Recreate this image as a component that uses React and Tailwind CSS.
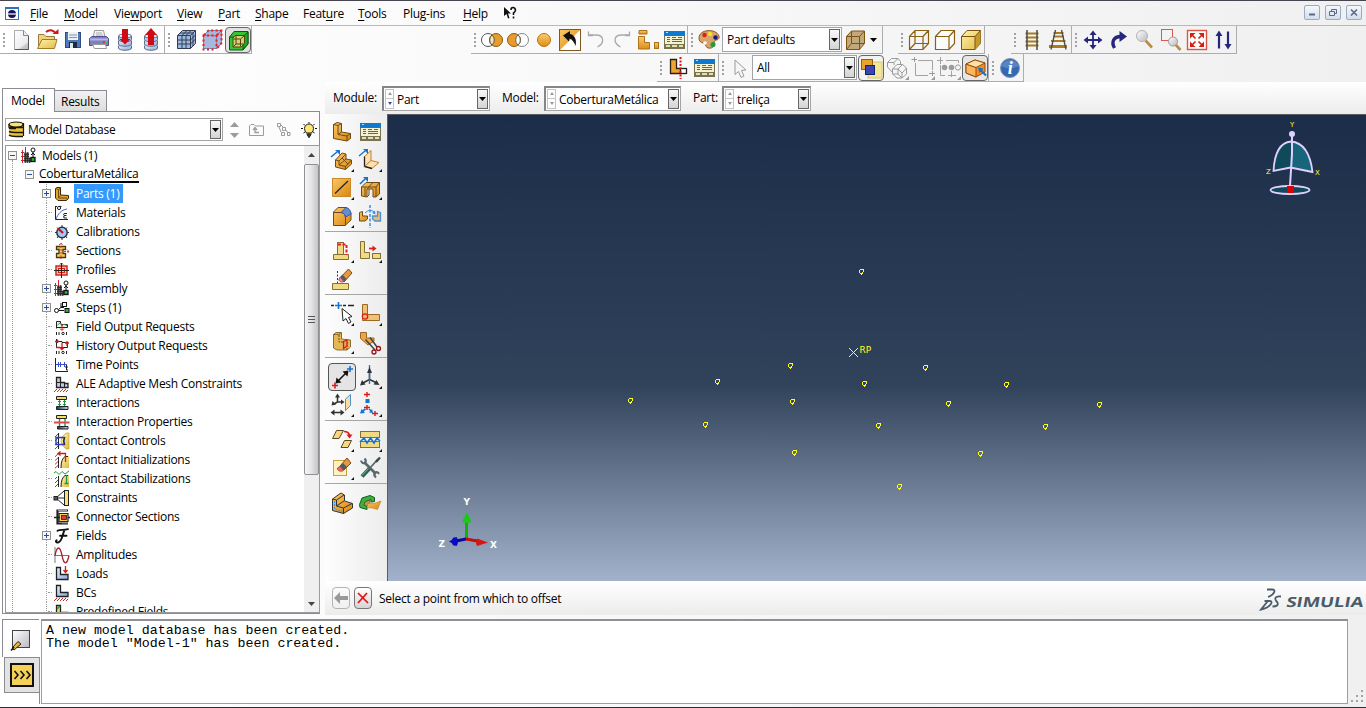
import React from "react";

const Svg = ({ s = 26, children }) => (
  <svg width={s} height={s} viewBox={`0 0 ${s} ${s}`} fill="none" className="block shrink-0">
    {children}
  </svg>
);

const Defs = () => (
  <svg width="0" height="0" className="absolute">
    <defs>
      <linearGradient id="or" x1="0" y1="0" x2="1" y2="1">
        <stop offset="0" stopColor="#fbc766" />
        <stop offset="1" stopColor="#d9860f" />
      </linearGradient>
      <linearGradient id="orv" x1="0" y1="0" x2="0" y2="1">
        <stop offset="0" stopColor="#fbcb70" />
        <stop offset="1" stopColor="#dd8d17" />
      </linearGradient>
      <linearGradient id="ye" x1="0" y1="0" x2="1" y2="1">
        <stop offset="0" stopColor="#fff3a8" />
        <stop offset="1" stopColor="#e0ba4a" />
      </linearGradient>
      <linearGradient id="bl" x1="0" y1="0" x2="1" y2="1">
        <stop offset="0" stopColor="#e6effb" />
        <stop offset="1" stopColor="#8ba6d8" />
      </linearGradient>
      <linearGradient id="gr" x1="0" y1="0" x2="1" y2="1">
        <stop offset="0" stopColor="#ffffff" />
        <stop offset="1" stopColor="#b9b9c0" />
      </linearGradient>
      <linearGradient id="dk" x1="0" y1="0" x2="1" y2="0">
        <stop offset="0" stopColor="#1c2f66" />
        <stop offset="1" stopColor="#c8d4ee" />
      </linearGradient>
    </defs>
  </svg>
);

const Grip = ({ c = "w-2" }) => (
  <div className={`${c} flex shrink-0 flex-col items-center justify-center gap-0.5`}>
    {[0, 1, 2, 3].map((i) => (
      <div key={i} className="h-0.5 w-0.5 bg-[#a2a2a6]" />
    ))}
  </div>
);

const Arrow = ({ up, c = "#000" }) => (
  <svg width="7" height="4" viewBox="0 0 7 4" className="block">
    <path d={up ? "M0 4L3.5 0L7 4Z" : "M0 0H7L3.5 4Z"} fill={c} />
  </svg>
);

/* ---------- file toolbar ---------- */
const Table = ({ x, y }) => (
  <g transform={`translate(${x} ${y})`} shapeRendering="crispEdges">
    <rect x="0" y="1" width="21" height="17" fill="#77744f" />
    <rect x="0" y="0" width="21" height="5" fill="#0f79cf" />
    <rect x="2" y="1" width="2" height="1" fill="#bfe0fa" />
    <rect x="1" y="5" width="19" height="8" fill="#f5f2d2" />
    <path d="M3 6.500H6M8 6.500H12M14 6.500H18M3 8.500H6M8 8.500H18M3 10.500H6M8 10.500H18" stroke="#5d6470" />
    <path d="M2 15H6M8 15H13M15 15H19" stroke="#e3dfb0" strokeWidth="2" />
  </g>
);

const icNew = (
  <Svg>
    <path d="M6.500 3.500H15.500L20.500 8.500V22.500H6.500Z" fill="url(#gr)" stroke="#88888f" />
    <path d="M6.500 3.500H15.500V8.500H20.500V15L10 22.500H6.500Z" fill="#fff" opacity=".6" />
    <path d="M20.500 9V22.500H7" stroke="#55555c" />
    <path d="M15.500 3.500V8.500H20.500" stroke="#88888f" fill="#eee" />
  </Svg>
);
const icOpen = (
  <Svg>
    <path d="M4.500 21V7.500H10L12 9.500H20.500V13" fill="#f3d27c" stroke="#9a7b3e" />
    <path d="M3.500 21.500L8 12.500H23L20.500 21.500Z" fill="url(#ye)" stroke="#a17c28" />
    <path d="M12 5C15 2.500 19 2.500 21.500 6" stroke="#d01818" strokeWidth="2" />
    <path d="M18.500 7H24.500V2Z" fill="#d01818" />
  </Svg>
);
const icSave = (
  <Svg>
    <rect x="5.500" y="5.500" width="15" height="15" fill="#4d79b8" stroke="#2f4d80" />
    <rect x="8" y="5" width="10" height="8" fill="#eef1f4" />
    <path d="M9 8H17M9 10.500H17" stroke="#8a93a0" />
    <rect x="9" y="15" width="8" height="6" fill="#1e2a40" />
    <rect x="10" y="16" width="3" height="5" fill="#dfe6f0" />
  </Svg>
);
const icPrint = (
  <Svg>
    <path d="M8.500 3.500H17.500L19.500 12H7Z" fill="#f4f4f4" stroke="#9a9a9a" />
    <path d="M10 6H16M10 8H17" stroke="#aaa" />
    <path d="M3.500 11.500L6 9.500H20.500L22.500 11.500V18.500H3.500Z" fill="#7c7fc0" stroke="#50528e" />
    <path d="M4 12.500H22" stroke="#b5b7e2" strokeWidth="2" />
    <rect x="17" y="14" width="2" height="2" fill="#d33" />
    <rect x="19" y="14" width="2" height="2" fill="#3c6" />
    <path d="M6.500 17.500H19.500L20.500 21.500H8.500Z" fill="#fff" stroke="#999" />
  </Svg>
);
const Disks = () => (
  <g stroke="#5e6c88">
    <path d="M6.500 18.500V21C6.500 24 19.500 24 19.500 21V18.500" fill="url(#bl)" />
    <path d="M6.500 13.500V17C6.500 20 19.500 20 19.500 17V13.500" fill="url(#bl)" />
    <path d="M6.500 9V12.500C6.500 15.500 19.500 15.500 19.500 12.500V9" fill="#b5c6e8" />
    <ellipse cx="13" cy="9" rx="6.500" ry="2" fill="#e8eefa" />
  </g>
);
const icDbDown = (
  <Svg>
    <Disks />
    <path d="M10 2H16V12H18.500L13 17.500L7.500 12H10Z" fill="#cf0a12" />
  </Svg>
);
const icDbUp = (
  <Svg>
    <Disks />
    <path d="M10 18H16V8H19L13 1L7 8H10Z" fill="#cf0a12" />
  </Svg>
);
const cubeF = "M4.500 8.500L9.500 3.500H22.500V16.500L17.500 21.500H4.500Z";
const icMesh = (
  <Svg>
    <path d={cubeF} fill="#9db8e0" stroke="#333c52" />
    <path d="M4.500 8.500H17.500V21.500M17.500 8.500L22.500 3.500M9 8.500V21.500M13 8.500V21.500M4.500 13H17.500L22.500 8M4.500 17H17.500L22.500 12M9 8.500L14 3.500M13 8.500L18 3.500M7 6H20V19" stroke="#333c52" />
  </Svg>
);
const icSeed = (
  <Svg>
    <path d={cubeF} fill="#a5b8de" />
    <path d="M4.500 8.500L9.500 3.500H22.500V16.500L17.500 21.500H4.500ZM4.500 8.500H17.500V21.500M17.500 8.500L22.500 3.500" stroke="#7787b5" />
    <path d="M3.500 8.500H17.500V22M4.500 8V22.500H17M5 8L9.500 3.500H22.500V16L18 21.500M18 8L22 4" stroke="#ee1c24" strokeWidth="2" strokeDasharray="2 2.500" />
  </Svg>
);
const icGreen = (
  <Svg>
    <path d="M4.500 10L9 4.500H23V17L18 23H4.500Z" fill="#36c436" stroke="#145214" />
    <path d="M18 9.500L23 5V17L18 22.500Z" fill="#1fa62a" stroke="#145214" />
    <path d="M4.500 10H18" stroke="#145214" />
    <path d="M10 8.500H19.500V16.500L16 20H8V11Z" fill="#d9cf74" stroke="#4c4610" />
    <path d="M8.500 12H15.500V19.500M15.500 12L19 9M11 9V17H19M11 17L8 20" stroke="#4c4610" />
  </Svg>
);

/* ---------- right toolbar, first row ---------- */
const icCircA = (
  <Svg>
    <circle cx="9" cy="13" r="6.500" fill="#fff" stroke="#555" />
    <circle cx="17" cy="13" r="6.500" fill="#e99c2c" stroke="#8a5a14" />
    <path d="M13 8A6.500 6.500 0 0 1 13 18A6.500 6.500 0 0 1 13 8Z" fill="#ffe3a8" stroke="#555" />
  </Svg>
);
const icCircB = (
  <Svg>
    <circle cx="17" cy="13" r="6.500" fill="#fff" stroke="#888" />
    <circle cx="9" cy="13" r="6.500" fill="#e99c2c" stroke="#8a5a14" />
    <path d="M13 8A6.500 6.500 0 0 1 13 18A6.500 6.500 0 0 1 13 8Z" fill="#fff" stroke="#666" />
  </Svg>
);
const icCircC = (
  <Svg>
    <circle cx="13" cy="13" r="6.500" fill="url(#orv)" stroke="#b9720f" />
  </Svg>
);
const icReplace = (
  <Svg>
    <rect x="2.500" y="2.500" width="21" height="21" fill="#fff" stroke="#7c5a20" />
    <path d="M3 3H23L3 23Z" fill="url(#or)" />
    <path d="M6 8.500L13 4V7C18 8 20 13 18.500 19C17 15 15.500 12.500 12.500 11.500L12 14.500Z" fill="#111" />
  </Svg>
);
const icUndo = (
  <Svg>
    <path d="M6 8H13C21 8 22 16 14.500 20" stroke="#a9a9ad" strokeWidth="1.300" />
    <path d="M5.500 4.500V8.500H10" stroke="#a9a9ad" strokeWidth="1.300" />
  </Svg>
);
const icRedo = (
  <Svg>
    <path d="M20 8H13C4 8 4 16 11.500 20" stroke="#a9a9ad" strokeWidth="1.300" />
    <path d="M20.500 4.500V8.500H16" stroke="#a9a9ad" strokeWidth="1.300" />
  </Svg>
);
const icParts = (
  <Svg>
    <path d="M4 3.500H12V7H4Z" fill="url(#orv)" stroke="#ad7116" />
    <path d="M3.500 9.500H9.500V15.500H14.500V22H3.500Z" fill="url(#orv)" stroke="#ad7116" />
    <rect x="19.500" y="15.500" width="4" height="6" fill="url(#orv)" stroke="#ad7116" />
  </Svg>
);
const icTable = (
  <Svg>
    <Table x={3} y={4} />
  </Svg>
);
const icPalette = (
  <Svg>
    <path d="M3 11C3 2 20 1 23 9C24 14 19 12 18 15C20 18 17 22 12 21C9 20 10 16 7 16C4 15 3 14 3 11Z" fill="#d8a469" stroke="#8b5a2b" />
    <circle cx="8.500" cy="8" r="2.200" fill="#d8201c" />
    <circle cx="14" cy="7" r="2.200" fill="#f2e11f" />
    <circle cx="19.500" cy="10.500" r="2.200" fill="#18187e" />
    <circle cx="17" cy="17.500" r="2.500" fill="#1f9c3c" />
    <circle cx="9" cy="16" r="1.800" fill="#fff" />
  </Svg>
);
const icBoxTan = (
  <Svg>
    <path d="M4.500 9.500L9.500 4H22.500V16.500L17.500 22.500H4.500Z" fill="#c3a87b" stroke="#7c5410" />
    <path d="M4.500 9.500H17.500V22.500M17.500 9.500L22.500 4M9.500 4V16.500H22.500M9.500 16.500L4.500 22.500" stroke="#7c5410" />
  </Svg>
);
const icWire = (
  <Svg>
    <path d="M3.500 9.500L9 3.500H22.500V16.500L17 22.500H3.500ZM3.500 9.500H17V22.500M17 9.500L22.500 3.500M9 3.500V16.500H22.500M9 16.500L3.500 22.500" stroke="#8a5f10" strokeWidth="1.200" />
  </Svg>
);
const icHidden = (
  <Svg>
    <path d="M3.500 9.500L9 3.500H22.500V16.500L17 22.500H3.500ZM3.500 9.500H17V22.500M17 9.500L22.500 3.500" fill="#fbfbfb" stroke="#8a5f10" strokeWidth="1.200" />
  </Svg>
);
const icShaded = (
  <Svg>
    <path d="M3.500 9.500L9 3.500H22.500V16.500L17 22.500H3.500Z" fill="url(#ye)" stroke="#7c5410" />
    <path d="M17 9.500L22.500 3.500V16.500L17 22.500Z" fill="#c49a2c" />
    <path d="M3.500 9.500H17V22.500M17 9.500L22.500 3.500" stroke="#7c5410" />
  </Svg>
);
const icLadder = (
  <Svg>
    <path d="M6.500 6.500H19.500M6.500 10.500H19.500M6.500 14.500H19.500M6.500 18.500H19.500" stroke="#a97c22" strokeWidth="2.200" />
    <path d="M8 3V23M18 3V23" stroke="#4a4a4a" strokeWidth="1.500" />
  </Svg>
);
const icPersp = (
  <Svg>
    <path d="M8.500 6H18.500M8 9.500H19M6 14H20.500" stroke="#a97c22" strokeWidth="1.800" />
    <path d="M4 19.500H22" stroke="#a97c22" strokeWidth="3" />
    <path d="M10.500 3L6 22.500M16.500 3L21 22.500" stroke="#4a4a4a" strokeWidth="1.300" />
  </Svg>
);
const icPan = (
  <Svg>
    <path d="M13 5V21M5 13H21" stroke="#26267c" strokeWidth="1.800" />
    <path d="M13 3.500L16.500 8H9.500ZM13 22.500L16.500 18H9.500ZM3.500 13L8 9.500V16.500ZM22.500 13L18 9.500V16.500Z" fill="#26267c" />
  </Svg>
);
const icRotate = (
  <Svg>
    <path d="M8.500 21C5 15 7.500 9.500 15 9.500" stroke="#26267c" strokeWidth="3.400" />
    <path d="M13.500 4L21 9.500L13.500 15Z" fill="#26267c" />
  </Svg>
);
const icZoom = (
  <Svg>
    <path d="M13.500 13.500L20 20.500" stroke="#b98c45" strokeWidth="2.600" />
    <circle cx="10" cy="9" r="5.500" fill="url(#gr)" stroke="#b2b2b2" />
  </Svg>
);
const icZoomBox = (
  <Svg>
    <rect x="3.500" y="2.500" width="11" height="11" stroke="#e2574a" />
    <path d="M17 17L22.500 23" stroke="#b98c45" strokeWidth="2.600" />
    <circle cx="15" cy="14.500" r="4.500" fill="url(#gr)" stroke="#999" />
  </Svg>
);
const icFit = (
  <Svg>
    <rect x="3.500" y="3.500" width="19" height="19" fill="#fff" stroke="#e05246" strokeWidth="1.400" />
    <path d="M6 6H11.500L6 11.500ZM20 6H14.500L20 11.500ZM6 20H11.500L6 14.500ZM20 20H14.500L20 14.500Z" fill="#d21f10" />
    <path d="M8 8L11.500 11.500M18 8L14.500 11.500M8 18L11.500 14.500M18 18L14.500 14.500" stroke="#d21f10" strokeWidth="1.600" />
  </Svg>
);
const icCycle = (
  <Svg>
    <path d="M9 7V21.500M18 4.500V19" stroke="#26267c" strokeWidth="2.200" />
    <path d="M9 3.500L12.500 9H5.500ZM18 22.500L21.500 17H14.500Z" fill="#26267c" />
  </Svg>
);

/* ---------- right toolbar, second row ---------- */
const icSkewL = (
  <Svg>
    <path d="M5.500 4.500H11.500V13.500H16V18.500H5.500Z" fill="#eda431" stroke="#2d2010" strokeWidth="1.300" />
    <rect x="15.500" y="13.500" width="6" height="5" fill="#fff" stroke="#222" strokeWidth="1.300" />
    <path d="M15.500 2V24" stroke="#e0151c" strokeWidth="2" strokeDasharray="2 1.500" />
  </Svg>
);
const icCursor = (
  <Svg>
    <path d="M9 5L9 19.500L12.500 16.500L15 22.500L18 21L15.500 15.500L20 15Z" fill="#f6f6f6" stroke="#9b9b9b" />
  </Svg>
);
const icOverlap = (
  <Svg>
    <rect x="10" y="7" width="14" height="16" fill="#f3e795" stroke="#d6c76c" />
    <rect x="3.500" y="4.500" width="11" height="10" fill="#e9a327" stroke="#8e6114" />
    <rect x="7.500" y="10.500" width="9" height="9" fill="#3746b0" stroke="#16206c" />
  </Svg>
);
const icGrayBoxes = (
  <Svg>
    <path d="M3.500 7.500L7.500 3.500H14L16.500 6.500V10M3.500 7.500H10L14 3.500M3.500 7.500V12L8 17M10 7.500V10M8.500 14L13 9.500H18.500L22.500 13V19L18 23H13L8.500 19ZM8.500 14H14L18 18M14 14L18.500 9.500M14 14V19L18 23M18 18L22.500 13M18 18V23M8.500 19H14" stroke="#9b9b9b" />
    <path d="M25 25H21L25 21Z" fill="#9b9b9b" />
  </Svg>
);
const icGrayRect = (
  <Svg>
    <path d="M8 5.500H22.500V15M5.500 8V20.500H18" stroke="#a3a3a3" />
    <path d="M1.500 4.500H7M4.500 2V7M19 18.500H25M22.500 16V21" stroke="#9b9b9b" />
    <path d="M25 25H21L25 21Z" fill="#9b9b9b" />
  </Svg>
);
const icGrayNodes = (
  <Svg>
    <path d="M1 5.500H7M4.500 2V9M4.500 10V20.500H9M10 5.500H22.500V8M15.500 16V22M12 20.500H20" stroke="#a3a3a3" />
    <circle cx="8.500" cy="12.500" r="2.800" fill="#9b9b9b" />
    <circle cx="15.500" cy="12.500" r="2.800" fill="#9b9b9b" />
    <circle cx="22" cy="12.500" r="2.600" stroke="#9b9b9b" />
    <path d="M25 25H21L25 21Z" fill="#9b9b9b" />
  </Svg>
);
const icOrangeBox = (
  <Svg>
    <path d="M4 9L13 5L23 8V17L14 22L4 18Z" fill="#f28c28" stroke="#9a4a0a" />
    <path d="M4 9L14 12.500V22L4 18Z" fill="#fbb55c" stroke="#9a4a0a" />
    <path d="M4 9L13 5L23 8L14 12.500Z" fill="#ffe3a4" stroke="#9a4a0a" />
    <path d="M18 14.500L24 20.500" stroke="#1272c8" strokeWidth="2" />
    <path d="M16 12.500L21.500 13.500L17.500 18Z" fill="#1272c8" />
  </Svg>
);
const icInfo = (
  <Svg>
    <circle cx="13" cy="13" r="9.500" fill="#3468b0" stroke="#7f97bd" />
    <path d="M4.500 11A9 9 0 0 1 21.500 11C16 14 10 14 4.500 11Z" fill="#6e98d0" opacity=".6" />
    <text x="13" y="19" textAnchor="middle" fontSize="18" fontStyle="italic" fontWeight="bold" fill="#fff" className="[font-family:'Liberation_Serif',serif]">i</text>
  </Svg>
);

/* ---------- toolbox ---------- */
const Cor = () => <path d="M26 23V26H23Z" fill="#111" />;
const B = ({ children, c, on }) => (
  <div className={`h-7 w-7 ${on ? "rounded-sm border border-[#555] bg-[#e4e4e4] [&>svg]:-m-px" : ""}`}>
    <Svg s={28}>
      {children}
      {c && <Cor />}
    </Svg>
  </div>
);
const gold = { fill: "url(#or)", stroke: "#6b4a1c" };
const pale = { fill: "#f0da84", stroke: "#857034" };
const boxIcons = [
  [
    <B><path d="M5.500 6.500L9 4.500L13.500 5.500V14L22.500 15.500V20.500L19 23L5.500 20.500Z" {...gold} /><path d="M5.500 6.500L10 7.500V16.500L19 18V23M10 7.500L13.500 5.500M10 16.500L13.500 14M19 18L22.500 15.500" stroke="#6b4a1c" /></B>,
    <B><Table x={4} y={5} /></B>,
  ],
  [
    <B c><path d="M7.500 14L14 7L18 8V13L23.500 14V18L17.500 23.500L7.500 21Z" {...gold} /><path d="M7.500 14L11 15V19L17.500 20.500V23.500M11 15L18 8M11 19L18 13M17.500 20.500L23.500 14M14 12L20 18" stroke="#6b4a1c" /><path d="M3 11L9 6" stroke="#1673d0" strokeWidth="1.600" /><path d="M7 4H12V9Z" fill="#1673d0" /></B>,
    <B c><path d="M8.500 10.500L15 4.500V14.500L23 16.500L16 22.500L8.500 20.500Z" fill="#ffe0ac" stroke="#b5813a" /><path d="M8.500 10.500V20.500L16 22.500" stroke="#222" strokeWidth="1.300" /><path d="M8.500 20.500L15 14.500" stroke="#b5813a" /><path d="M3 10L9 5" stroke="#1673d0" strokeWidth="1.400" /><path d="M7 3H12V8Z" fill="#1673d0" /></B>,
  ],
  [
    <B c><rect x="4.500" y="4.500" width="18" height="18" fill="url(#or)" stroke="#c98a2c" /><path d="M7 19.500L20 7" stroke="#222" strokeWidth="1.200" /></B>,
    <B c><path d="M5.500 13L10 8.500H23.500V20L20 23H17V15H11V23L5.500 22Z" {...gold} /><path d="M5.500 13H20V23M20 13L23.500 8.500M9 13V22M11 15L14 12M13 12.500L17 8.500M11 23L13 21V15" stroke="#6b4a1c" /><path d="M4 10L9 5" stroke="#1673d0" strokeWidth="1.600" /><path d="M7 3H12V8Z" fill="#1673d0" /></B>,
  ],
  [
    <B c><path d="M5.500 10L10 5.500H18L23 11V18L17 23.500H5.500Z" {...gold} /><path d="M5.500 10.500H13C16 10.500 17.500 13 17.500 16V23.500" stroke="#6b4a1c" /><path d="M13 10.500L18 5.500C21 6 23 9 23 12L17.500 15C17 12 15 10.500 13 10.500Z" fill="#5f8fd6" stroke="#39599c" /></B>,
    <B><path d="M3.500 10.500L6.500 9.500V14H11.500V17L9 19H3.500Z" {...gold} /><path d="M24.500 10.500L21.500 9.500V14H16.500V17L19 19H24.500Z" fill="#f1b765" stroke="#4a93cf" strokeWidth="1.300" /><path d="M14 3V26" stroke="#3b8de0" strokeDasharray="3 1.500" strokeWidth="1.500" /><path d="M9 11Q14 6 18 10" stroke="#3b8de0" /><path d="M19.500 12.500L19 8.500L16 11Z" fill="#3b8de0" /></B>,
  ],
];
const boxB = [
  [
    <B c><rect x="9.500" y="5.500" width="6" height="12" {...pale} /><path d="M5.500 17.500H20.500V22.500H5.500Z" {...pale} /><path d="M10 7.500H18M18.500 8V18" stroke="#e02020" strokeWidth="2" strokeDasharray="3 1.500" /></B>,
    <B c><path d="M4.500 4.500H8.500V15.500H13.500V21.500H4.500Z" {...pale} /><rect x="16.500" y="16.500" width="8" height="5" {...pale} /><path d="M13 11.500H17.500" stroke="#e02010" strokeWidth="1.800" /><path d="M16.500 8.500L20.500 11.500L16.500 14.500Z" fill="#e02010" /></B>,
  ],
  [
    <B><path d="M9.500 6V19H16" stroke="#333" strokeDasharray="2 1.500" fill="#fff" /><path d="M4.500 18.500H20.500V24.500H4.500Z" {...pale} /><path d="M12 13L16 17L24 8L20.500 4Z" fill="#e49a3c" stroke="#7a4a22" /><path d="M11 13L14.500 9.500L18.500 14L15.500 17Z" fill="#555a68" /><path d="M11 14C10 16 14 18 16 16.500L12.500 12.500Z" fill="#ee8a96" stroke="#a84b58" /></B>,
  ],
];
const boxC = [
  [
    <B c><path d="M3 5.500H6M15 5.500H18M20 5.500H26" stroke="#222" strokeWidth="1.300" /><path d="M7 5.500H14M10.500 2V9" stroke="#1673d0" strokeWidth="1.600" /><path d="M14 8.500L15 21L18 18.500L20.500 23.500L23 22L20.500 17.500L24 16.500Z" fill="#fff" stroke="#222" /></B>,
    <B c><path d="M6.500 4.500H11.500V14.500H23.500V20.500H6.500Z" fill="#efc27a" stroke="#9a6a22" /><circle cx="9" cy="16.500" r="2.700" fill="#f2b178" stroke="#e01818" strokeWidth="1.200" /></B>,
  ],
  [
    <B c><path d="M5.500 6.500L8 4.500H13.500V11L22.500 12V19L19 22H9L5.500 20Z" {...pale} fill="#e6b655" /><path d="M5.500 6.500H11V14H19V22M11 6.500L13.500 4.500" stroke="#6b4a1c" strokeDasharray="2 1" /><path d="M15.500 13.500L19 12V18L15.500 20.500Z" fill="#e8a05a" stroke="#d01818" strokeWidth="1.200" /></B>,
    <B><path d="M4.500 4.500H10.500V10L18 10V13L12 17L4.500 10.500Z" fill="#eda54a" stroke="#9a6a22" /><path d="M9.500 11.500L19 22M14 9.500L21 19" stroke="#444" strokeWidth="1.500" /><circle cx="18" cy="24" r="2" stroke="#9b1010" strokeWidth="1.300" /><circle cx="22.500" cy="20.500" r="2" stroke="#9b1010" strokeWidth="1.300" /></B>,
  ],
];
const boxD = [
  [
    <B on><path d="M10 18L18 10" stroke="#111" strokeWidth="1.600" /><path d="M7.500 20.500L8.500 14.500L13.500 19.500ZM20.500 7.500L14.500 8.500L19.500 13.500Z" fill="#111" /><path d="M4 22.500H10M7 19.500V25.500" stroke="#e01818" strokeWidth="1.600" /><path d="M19 6H25M22 3V9" stroke="#1673d0" strokeWidth="1.600" /></B>,
    <B c><path d="M13.500 8V16.500L7 20M13.500 16.500L21 20" stroke="#333" strokeWidth="1.500" /><path d="M13.500 2V21" stroke="#1673d0" strokeWidth="1.300" /><path d="M13.500 4L16 10H11ZM4 22.500L6 17L9.500 21.500ZM23.500 22L17.500 21.500L20.500 17Z" fill="#333" /></B>,
  ],
  [
    <B c><path d="M9.500 5V11L6 13M9.500 11H14M5 21.500H14" stroke="#333" strokeWidth="1.500" /><path d="M9.500 2.500L12 6.500H7ZM16.500 11L13 8.500V13.500ZM3.500 14.500L4.500 10L8 13.500ZM2.500 21.500L6.500 18.500V24.500ZM16.500 21.500L12.500 18.500V24.500Z" fill="#333" /><path d="M17.500 8L22.500 3.500V14.500L17.500 19.500Z" fill="#fbdc9c" stroke="#4a93cf" /></B>,
    <B c><path d="M8 3.500H14M11 1V6M8 16.500H14M11 14V19M16 22.500H22M19 20V25" stroke="#e01818" strokeWidth="1.400" /><rect x="9.500" y="8" width="4" height="4" fill="#1673d0" /><path d="M9.500 18L6 20.500M13 18L16 20.500" stroke="#1673d0" strokeWidth="1.600" /><path d="M4 22.500L5.500 18L9 22ZM17 22L13 21.500L16 18Z" fill="#1673d0" /></B>,
  ],
];
const boxE = [
  [
    <B c><path d="M8.500 4.500H15.500L11 12.500H4.500ZM16.500 14.500H23.500L20 21.500H13Z" fill="#f6d884" stroke="#5c4a22" /><path d="M16 5.500Q20.500 5.500 21.500 9" stroke="#e01818" strokeWidth="1.600" /><path d="M18.500 8.500H24.500L21.500 12.500Z" fill="#e01818" /></B>,
    <B c><rect x="4.500" y="5.500" width="19" height="6" {...pale} /><rect x="4.500" y="15.500" width="19" height="6" {...pale} /><path d="M4 16L8 12L11 17L14.500 12L18 17L21 12L24 15" stroke="#1673d0" strokeWidth="1.700" /></B>,
  ],
  [
    <B c><rect x="5.500" y="6.500" width="13" height="15" fill="#fff2bd" stroke="#caa03c" /><path d="M12 12L16 16L23 9L19 4Z" fill="#e49a3c" stroke="#7a4a22" /><path d="M12 12L15 9L19 13L16 16Z" fill="#555a68" /><path d="M9.500 14C9 17 13 18 15.500 16.500L12 12.500Z" fill="#f06a6a" stroke="#a84b58" /></B>,
    <B><path d="M14 14L22 5" stroke="#5b676d" strokeWidth="1.800" /><path d="M8 8L20 20" stroke="#5b676d" strokeWidth="2.600" /><path d="M5 6.500Q6 10 9 9Q11 7 8.500 4.500M23 20Q21.500 17 19 18.500Q17 21 20 23.500" stroke="#5b676d" strokeWidth="2" /><path d="M20 8L24 3.500" stroke="#39454b" strokeWidth="2.200" /><path d="M13.500 14.500L6 22.500" stroke="#2e6350" strokeWidth="4" /><path d="M12.500 14.500L6 21.500" stroke="#79b495" /></B>,
  ],
];
const boxF = [
  [
    <B><path d="M4.500 10L13 4L16.500 6V12L24.500 14.500V19L15.500 24.500L4.500 21.500Z" fill="url(#or)" stroke="#333" /><path d="M4.500 10L8.500 11V17L15.500 19V24.500M8.500 11L16 6M8.500 17L16 12M15.500 19L24 14.500" stroke="#333" /><path d="M6.500 12V20L14 22.500V20.500" stroke="#3b8de0" strokeDasharray="2 1" /></B>,
    <B><path d="M3.500 15.500L6 9L14 6.500L18.500 8.500V12.500L15 13V10.500L9 13L8 16L11 17.500V20.500L4 18.500Z" fill="#37b23c" stroke="#1a5c1c" /><path d="M9 13L14 11V14.500L11 17L8 16Z" fill="#b9995a" stroke="#5c4a1c" strokeWidth=".6" /><path d="M12 14.500Q19 15 25 12L21.500 20.500Q16 18 11 19Z" fill="url(#or)" stroke="#c07a1c" strokeWidth=".6" /></B>,
  ],
];
const boxGroups = [boxIcons, boxB, boxC, boxD, boxE, boxF];

/* ---------- model tree ---------- */
const hatch = "M0 16L3 13M3 16L6 13M6 16L9 13M9 16L12 13M12 16L14 14";
const vh = "M1 4L4 1M1 8L4 5M1 12L4 9M1 16L4 13";
const icAsm = (
  <>
    <path d="M4 5H7V10H11V14H4Z" fill="#444" />
    <path d="M3 4.500H8V9.500H10V14.500H3Z" fill="#666" />
    <path d="M3 6.500H8M3 8.500H8M3 10.500H10M3 12.500H10M4.500 4V15M6.500 4V15M8.500 10V15" stroke="#222" strokeWidth=".7" />
    <path d="M1.500 2V15M4.500 -1V4M0 4.500H3M0 8.500H3M0 12.500H3" stroke="#d8202a" />
    <circle cx="12" cy="2" r="2" stroke="#111" fill="#fff" />
    <path d="M12 4V10M10 7L12 5L14 7" stroke="#111" />
    <rect x="10" y="9.500" width="4" height="4" fill="#2fae3a" stroke="#111" strokeWidth="1.300" />
  </>
);
const treeIcons = {
  asm: icAsm,
  part: <><path d="M1.500 2.500L3 1.500H6.500V9L14.500 9.500V12.500L12.500 14.500H4L1.500 12Z" fill="#e6a52f" stroke="#3d2a08" /><path d="M2 2.500L4.500 4V12L13 12V14M4.500 4L6 2M5 11.500L6.500 9.500" stroke="#6d4c10" /></>,
  mat: <><path d="M1.500 1V14.500H14M1 1.500H3" stroke="#222" /><path d="M2 14C4 9 7 5 13 4" stroke="#4b62c8" /><circle cx="5" cy="3" r="1.600" stroke="#222" /><path d="M5 1.400H7.500M13 8.500H11Q9.500 8.500 9.500 9.500T11 10.500H12.500M11 10.500Q9.500 11 9.500 12T11 13H13" stroke="#222" /></>,
  cal: <><circle cx="8" cy="8.500" r="5.200" fill="#a9c6f0" stroke="#26324c" strokeWidth="1.500" /><path d="M8 1V3M8 14V16M1 8.500H3M13 8.500H15M3 3.500L4.500 5M13 3.500L11.500 5M3 14L4.500 12M13 14L11.500 12" stroke="#26324c" /><path d="M4 4.500L9 9" stroke="#c2161c" strokeWidth="2.200" /></>,
  sec: <><path d="M2.500 3.500H11.500V6.500H9V10.500H11.500V14.500H2.500V10.500H5V6.500H2.500Z" fill="#f4cf62" stroke="#4a3510" strokeWidth="1.300" /><path d="M7 0V16M5 2L7 0L9 2M10 8.500H15M13 6.500L15 8.500L13 10.500" stroke="#dd3a30" strokeDasharray="2 1" /></>,
  pro: <><rect x="2" y="4" width="11" height="9" fill="#f6c58c" stroke="#d0241c" strokeWidth="1.500" /><rect x="4.500" y="6.500" width="6" height="4" stroke="#d0241c" /><path d="M7.500 1V16M0 8.500H15M6 2.500L7.500 1L9 2.500" stroke="#222" /></>,
  step: <><circle cx="2.500" cy="10.500" r="2" stroke="#111" /><path d="M4.500 9.500L8.500 6M5 10.500H10" stroke="#111" /><rect x="8.500" y="2.500" width="4" height="4" fill="#fff" stroke="#111" /><rect x="11" y="8.500" width="4" height="4" fill="#2fae3a" stroke="#111" /><path d="M7 3V7.500H10" stroke="#111" /></>,
  fo: <><path d="M2.500 9.500V2.500H6.500V4.500L8 5.500H13.500V8.500H2.500" fill="#eaf4ea" stroke="#222" /><path d="M3.500 6L6 4L8 7L10 5L13 7" stroke="#2aa040" /><path d="M8 5V11M6 9.500L8 11.500L10 9.500" stroke="#d01c1c" /><path d="M2.500 13V16M5 13V16M12.500 13V16" stroke="#222" /><circle cx="9" cy="14.500" r="1.200" stroke="#222" /></>,
  ho: <><path d="M2.500 1V9.500H13.500V4.500H8V3.500H2" stroke="#222" /><path d="M1 3.500H5M3.500 1.500V5M11 5H15M13 3V8M2 9.500H6M8 5V11M6 9.500L8 11.500L10 9.500" stroke="#d01c1c" strokeWidth="1.300" /><path d="M2.500 13V16M5 13V16M12.500 13V16" stroke="#222" /><circle cx="9" cy="14.500" r="1.200" stroke="#222" /></>,
  tp: <><path d="M1.500 1V14.500H14" stroke="#222" /><path d="M2 7.500H13M4.500 5V10M6.500 5V10M10.500 5V10" stroke="#3850c0" /><path d="M12.500 8V13H14M11 10H14" stroke="#222" /></>,
  ale: <><path d="M2.500 1.500H6.500V6.500H10.500V7.500H14V11.500H2.500Z" fill="#c2cbe0" stroke="#222" strokeWidth="1.300" /><path d="M2.500 6.500H6.500V11.500M10.500 7V11.500" stroke="#222" /><path d={hatch} stroke="#c8282c" /></>,
  int: <><path d="M2.500 1.500H12.500V4.500H2.500Z" fill="#f3dd62" stroke="#222" /><path d="M2.500 11.500H14V14.500H2.500Z" fill="url(#dk)" stroke="#222" /><path d="M5.500 5V11M10.500 5V11M4 6.500H7M9 6.500H12M4 9.500H7M9 9.500H12" stroke="#1d9a44" /></>,
  ip: <><path d="M2.500 1.500H12.500V4.500H2.500Z" fill="#f3dd62" stroke="#222" /><path d="M3.500 12.500H14V15H3.500Z" fill="url(#dk)" stroke="#222" /><path d="M5.500 5V12M11 5V12" stroke="#1d9a44" strokeWidth="1.400" /><path d="M0 8.500H15.500" stroke="#e0484c" strokeWidth="2" /></>,
  cc: <><path d="M15 0V16H12Q7 12 7 8T12 0Z" fill="url(#ye)" stroke="#b9952d" strokeWidth=".6" /><path d={vh} stroke="#c8282c" /><path d="M4.500 0V16" stroke="#222" /><path d="M2 4.500H10V11.500H2Z" stroke="#2b3bc4" strokeWidth="1.400" /><path d="M11 4Q8 8 11 12" stroke="#222" /></>,
  ci: <><path d="M15 4V16H7Q7 7 11 4Z" fill="url(#ye)" /><path d="M7 16Q7 7 11 4.500H14" stroke="#222" /><path d={vh} stroke="#c8282c" transform="translate(0 1) scale(1 .95)" /><path d="M4.500 5V16" stroke="#222" /><path d="M4 1.500H11.500V10M6.500 -.5L4 1.500L6.500 3.500" stroke="#d01c1c" strokeWidth="1.300" /></>,
  cs: <><path d="M15 4V16H7Q7 7 11 4Z" fill="url(#ye)" /><path d="M7 16Q7 7 11 4.500H14" stroke="#222" /><path d="M1 8L3 6M1 12L4 9M1 16L4 13" stroke="#c8282c" /><path d="M4.500 5V16" stroke="#222" /><path d="M0 2L2 .5L5 3.500L8 .5L11 3L15 0" stroke="#1d9a44" /><path d="M12.500 4V12.500M10.500 12.500H14.500" stroke="#1d9a44" strokeWidth="1.300" /></>,
  con: <><rect x="10.500" y=".5" width="4" height="15" fill="#f5e07a" stroke="#222" /><path d="M2 8L10 1M2 8H10M2 8L10 15" stroke="#222" /><rect x="0" y="6.500" width="3.500" height="3.500" fill="#556" stroke="#222" /></>,
  cx: <><path d="M14 1.500H3.500V14.500H14" stroke="#222" strokeWidth="2.200" /><path d="M5 4.500H14V12.500H5Z" fill="#f2d45a" stroke="#222" strokeWidth="1.200" /><rect x="7.500" y="6.500" width="5" height="4" fill="#e03a3a" stroke="#222" strokeWidth=".8" /><path d="M0 8.500H6M14 8.500H16" stroke="#222" strokeWidth="1.500" /><path d="M4 1.500H13" stroke="#aab" strokeWidth=".9" /><path d="M8 14.500H14" stroke="#3050b0" /></>,
  fld: <path d="M3.500 2.800C6 1.300 9 2.400 14 1.200M10.500 2C8.500 6 8 14 4 14.500C2 14.700 1.300 13 2.600 12.300M6 7.800H12.500" stroke="#111" strokeWidth="1.900" strokeLinecap="round" />,
  amp: <><path d="M1 0V16M0 8.500H15" stroke="#777" /><path d="M1 8.500C3 -1.500 6 -1.500 8 8.500S13 18 15 8.500" stroke="#a32230" strokeWidth="1.300" /></>,
  load: <><path d="M2.500 1.500H6.500V8.500H14V13.500H2.500Z" fill="url(#bl)" stroke="#222" strokeWidth="1.300" /><path d="M11.500 0V6M9.500 4L11.500 6.500L13.500 4" stroke="#d01c1c" strokeWidth="1.300" /></>,
  bc: <><path d="M2.500 .5H6.500V7.500H14V11.500H2.500Z" fill="url(#bl)" stroke="#222" strokeWidth="1.300" /><path d={hatch} stroke="#c8282c" /></>,
  pf: <><path d="M2.500 1.500H6.500V8.500H14V13.500H2.500Z" fill="#e8df58" stroke="#222" strokeWidth="1.300" /><path d="M3 5L6 2" stroke="#1d9a44" strokeWidth="1.500" /></>,
};
const rows = [
  ["Parts (1)", "part", 1, 1],
  ["Materials", "mat"],
  ["Calibrations", "cal"],
  ["Sections", "sec"],
  ["Profiles", "pro"],
  ["Assembly", "asm", 1],
  ["Steps (1)", "step", 1],
  ["Field Output Requests", "fo"],
  ["History Output Requests", "ho"],
  ["Time Points", "tp"],
  ["ALE Adaptive Mesh Constraints", "ale"],
  ["Interactions", "int"],
  ["Interaction Properties", "ip"],
  ["Contact Controls", "cc"],
  ["Contact Initializations", "ci"],
  ["Contact Stabilizations", "cs"],
  ["Constraints", "con"],
  ["Connector Sections", "cx"],
  ["Fields", "fld", 1],
  ["Amplitudes", "amp"],
  ["Loads", "load"],
  ["BCs", "bc"],
  ["Predefined Fields", "pf"],
];

const Toggle = ({ plus }) => (
  <svg width="9" height="9" viewBox="0 0 9 9" shapeRendering="crispEdges" className="block shrink-0">
    <rect x=".5" y=".5" width="8" height="8" fill="#f6f6f6" stroke="#919191" />
    <path d={plus ? "M2 4.500H7M4.500 2V7" : "M2 4.500H7"} stroke="#2b4a9c" />
  </svg>
);
const TIcon = ({ n }) => (
  <svg width="16" height="16" viewBox="0 0 16 16" fill="none" className="block shrink-0 overflow-visible">
    {treeIcons[n]}
  </svg>
);

const Row = ({ r }) => (
  <div className="flex h-[19px] items-center">
    <div className="flex h-full w-[46px] shrink-0 justify-center pl-[35px]">
      <div className="flex h-full w-[9px] shrink-0 flex-col items-center justify-center">
        {r[2] ? (
          <>
            <div className="w-px flex-1 border-l border-dotted border-[#9a9a9a]" />
            <Toggle plus />
            <div className="w-px flex-1 border-l border-dotted border-[#9a9a9a]" />
          </>
        ) : (
          <div className="h-full w-px border-l border-dotted border-[#9a9a9a]" />
        )}
      </div>
    </div>
    <div className={`-ml-1 mr-[2px] w-1 ${r[2] ? "" : "border-t border-dotted border-[#9a9a9a]"}`} />
    <TIcon n={r[1]} />
    <div className={`ml-1 h-[19px] px-[2px] leading-[19px] ${r[3] ? "bg-[#3399ff] pr-[3px] text-white" : ""}`}>{r[0]}</div>
  </div>
);

const Combo = ({ text, c, spin, on }) => (
  <div className={`flex h-[25px] shrink-0 border border-[#a3a3a8] bg-white ${spin ? "border-l-2 border-t-2 border-l-[#85858a] border-t-[#85858a]" : ""} ${c}`}>
    {spin && (
      <div className="m-px flex w-[9px] flex-col border border-[#c4c4c4]">
        <div className="flex flex-1 items-center justify-center border-b border-[#c4c4c4]">
          <svg width="4" height="3" viewBox="0 0 4 3"><path d="M0 3L2 0L4 3Z" fill="#999" /></svg>
        </div>
        <div className="flex flex-1 items-center justify-center">
          <svg width="4" height="3" viewBox="0 0 4 3"><path d="M0 0H4L2 3Z" fill={on ? "#2b4fb0" : "#999"} /></svg>
        </div>
      </div>
    )}
    <div className={`flex-1 whitespace-nowrap leading-[23px] ${spin ? "pl-[2px] leading-[22px]" : "pl-[4px]"}`}>{text}</div>
    <div className="my-px mr-px flex w-[11px] items-center justify-center border border-[#666] bg-gradient-to-b from-[#f8f8f8] to-[#d4d4d4]">
      <Arrow />
    </div>
  </div>
);

const menus = [
  ["w-[34px]", "", "F", "ile"],
  ["w-[50px]", "", "M", "odel"],
  ["w-[63px]", "Vie", "w", "port"],
  ["w-[41px]", "", "V", "iew"],
  ["w-[37px]", "", "P", "art"],
  ["w-[48px]", "", "S", "hape"],
  ["w-[55px]", "Feat", "u", "re"],
  ["w-[45px]", "", "T", "ools"],
  ["w-[60px]", "Plu", "g", "-ins"],
  ["w-[39px]", "", "H", "elp"],
];

const WinBtn = ({ children }) => (
  <div className="h-[15px] w-4 rounded-[2px] border border-[#9aabc2] bg-gradient-to-b from-[#f4f8fd] to-[#d3deec]">
    <svg width="14" height="13" viewBox="0 0 14 13" fill="none" stroke="#5a6a82">{children}</svg>
  </div>
);

const pts = [
  [861, 271], [790, 365], [717, 381], [630, 400], [792, 401], [864, 383], [925, 367], [1006, 384],
  [948, 403], [1099, 404], [705, 424], [878, 425], [1045, 426], [794, 452], [980, 453], [899, 486],
];

const Canvas = () => (
  <svg width="978" height="466" viewBox="388 115 978 466" fill="none" className="block tracking-normal">
    <g stroke="#ffff1a" shapeRendering="crispEdges">
      {pts.map(([x, y]) => (
        <path key={x} d={`M${x - 1} ${y - 1.5}H${x + 3}M${x - 1.5} ${y - 1}V${y + 2}M${x + 2.5} ${y - 1}V${y + 1}M${x + 1.5} ${y + 1}V${y + 2}M${x - 1} ${y + 2.5}H${x + 2}M${x} ${y + 3.5}H${x + 1}`} />
      ))}
    </g>
    <path d="M849 348L858 357M858 348L849 357" stroke="#ffff1a" />
    <text x="859.500" y="353" fontSize="9" fill="#ffff1a" className="[font-family:'DejaVu_Sans',sans-serif]">RP</text>

    <path d="M1291 141.500Q1275 143 1273.500 171L1290.500 167.500Z" fill="#10495a" />
    <path d="M1291 141.500Q1309 143 1312.500 172L1290.500 167.500Z" fill="#17657a" />
    <path d="M1291 141.500Q1275 143 1273.500 171L1290.500 167.500L1312.500 172Q1309 143 1291 141.500Z" stroke="#e0d0ff" strokeWidth="1.800" />
    <ellipse cx="1290" cy="190" rx="19.500" ry="4" fill="#10495a" stroke="#e0d0ff" strokeWidth="1.800" />
    <path d="M1292 134V154L1290 186" stroke="#e0d0ff" strokeWidth="2" />
    <circle cx="1292" cy="134" r="3" fill="#e0d0ff" />
    <rect x="1287" y="186" width="7" height="7" fill="#d80000" />
    <g fontSize="7" fill="#ffff1a" className="[font-family:'DejaVu_Sans',sans-serif]">
      <text x="1290" y="127">Y</text>
      <text x="1315" y="175">X</text>
      <text x="1266" y="174">Z</text>
    </g>

    <path d="M466.500 539V521" stroke="#10b010" strokeWidth="3" />
    <path d="M467 512L471.500 522Q467 524 462 522Z" fill="#1ac81a" />
    <path d="M466 539L456 541" stroke="#0808a8" strokeWidth="3" />
    <path d="M449 541.500L457 537V546Z" fill="#0a0ac4" />
    <ellipse cx="455" cy="541.500" rx="3" ry="4.200" fill="#0a0ac4" />
    <path d="M466 539L480 541.500" stroke="#c01010" strokeWidth="3" />
    <path d="M488 542.500L477 538.500Q475 542 477 546Z" fill="#d81414" />
    <g fontSize="9" fill="#fff" fontWeight="bold" className="[font-family:'DejaVu_Sans',sans-serif]">
      <text x="463.500" y="505">Y</text>
      <text x="490" y="548">X</text>
      <text x="438.500" y="547">Z</text>
    </g>
  </svg>
);

export default function App() {
  return (
    <div className="flex h-[708px] w-[1366px] flex-col overflow-hidden bg-gradient-to-r from-white to-[#f0f0f0] text-xs tracking-[-0.26px] text-black [font-family:'Open_Sans','Noto_Sans',sans-serif]">
      <Defs />
      <div className="h-px shrink-0 bg-[#45454d]" />

      {/* menu bar */}
      <div className="flex h-[25px] shrink-0 items-center border-b border-[#b9b9bb]">
        <svg width="14" height="13" viewBox="0 0 14 13" className="ml-[5px] mr-[11px]">
          <rect x=".5" y=".5" width="13" height="12" fill="#fff" stroke="#2f6fc0" />
          <path d="M0 1H14" stroke="#2f6fc0" strokeWidth="2" />
          <circle cx="7" cy="7" r="4" fill="#15155e" />
          <path d="M2 7H12" stroke="#fff" strokeWidth="1.200" />
        </svg>
        {menus.map((m) => (
          <div key={m[3]} className={`${m[0]} whitespace-nowrap pt-[2px]`}>
            {m[1]}
            <span className="underline underline-offset-2">{m[2]}</span>
            {m[3]}
          </div>
        ))}
        <svg width="14" height="14" viewBox="0 0 14 14" fill="none" className="ml-px">
          <path d="M1 1V10L3.500 8L5 12.500L6.500 12L5 7.500H8Z" fill="#111" />
          <path d="M8 4Q8 1.500 10 1.500T12.500 4Q12.500 5.500 10.500 7V9M10.500 10.500V12.500" stroke="#111" strokeWidth="1.600" />
        </svg>
        <div className="ml-auto mr-1 flex gap-[5px] pb-[2px]">
          <WinBtn><path d="M4 8.500H10" strokeWidth="2" /></WinBtn>
          <WinBtn><path d="M5.500 5V3.500H10.500V7.500H9M3.500 5.500H8.500V9.500H3.500Z" /></WinBtn>
          <WinBtn><path d="M4 3.500L10 9.500M10 3.500L4 9.500" strokeWidth="1.600" /></WinBtn>
        </div>
      </div>

      {/* first tool row */}
      <div className="flex h-7 shrink-0">
        <div className="flex h-7 w-[165px] border-b border-r border-[#adadb1] pt-px">
          <Grip />{icNew}{icOpen}{icSave}{icPrint}{icDbDown}{icDbUp}
        </div>
        <div className="flex h-7 w-[87px] border-b border-r border-[#adadb1] pt-px">
          <Grip />{icMesh}{icSeed}
          <div className="h-[26px] w-[26px] rounded border border-[#666] bg-[#e2e2e2] [&>svg]:-m-px">{icGreen}</div>
        </div>
        <div className="ml-[219px] flex h-7 w-[217px] border-b border-r border-[#adadb1] pt-px">
          <Grip />{icCircA}{icCircB}{icCircC}{icReplace}{icUndo}{icRedo}{icParts}{icTable}
        </div>
        <div className="flex h-7 w-[195px] border-b border-r border-[#adadb1] pt-px">
          <Grip />{icPalette}
          <Combo text="Part defaults" c="w-[120px]" />
          {icBoxTan}
          <div className="flex items-center pl-[2px]"><Arrow /></div>
        </div>
        <div className="ml-[15px] flex h-7 w-[87px] border-b border-r border-[#adadb1] pt-px">
          <Grip />{icWire}{icHidden}{icShaded}
        </div>
        <div className="ml-[26px] flex h-7 w-[61px] border-b border-r border-[#adadb1] pt-px">
          <Grip />{icLadder}{icPersp}
        </div>
        <div className="flex h-7 w-[165px] border-b border-r border-[#adadb1] pt-px">
          <Grip />{icPan}{icRotate}{icZoom}{icZoomBox}{icFit}{icCycle}
        </div>
      </div>

      {/* second tool row */}
      <div className="flex h-7 shrink-0 pl-[657px]">
        <div className="flex h-7 w-[62px] border-b border-r border-[#adadb1] pt-px">
          <Grip />{icSkewL}{icTable}
        </div>
        <div className="flex h-7 w-[270px] border-b border-r border-[#adadb1] pt-px">
          <Grip c="w-[7px]" />{icCursor}
          <Combo text="All" c="w-[105px]" />
          <div className="ml-px h-[26px] w-[26px] rounded border border-[#666] bg-[#f2f2f2] [&>svg]:-m-px">{icOverlap}</div>
          {icGrayBoxes}{icGrayRect}{icGrayNodes}
          <div className="h-[26px] w-[26px] rounded border border-[#666] bg-[#e6e6e6] [&>svg]:-m-px">{icOrangeBox}</div>
        </div>
        <div className="flex h-7 w-[35px] border-b border-r border-[#adadb1] pt-px">
          <Grip />{icInfo}
        </div>
      </div>

      {/* main area */}
      <div className="flex h-[533px] shrink-0">
        <div className="flex w-[325px] shrink-0 flex-col pl-[2px] pt-[6px]">
          <div className="flex h-6 items-end">
            <div className="z-10 h-6 w-[53px] border-x border-t border-[#8b8b93] bg-white pl-2 leading-[24px]">Model</div>
            <div className="h-[22px] w-[52px] border-r border-t border-[#8b8b93] bg-gradient-to-b from-[#f2f2f2] to-[#dcdcdc] pl-[6px] leading-[22px]">Results</div>
          </div>
          <div className="-mt-px flex h-[503px] w-[318px] flex-col border border-[#8b8b93] pl-[2px] pt-[6px]">
            <div className="flex h-[23px] w-[315px] shrink-0 items-center">
              <div className="flex h-[23px] w-[218px] border border-[#a3a3a8] bg-white">
                <svg width="20" height="21" viewBox="0 0 20 21" fill="none" className="ml-px">
                  <path d="M2 5V15Q3 17.500 9 17.500H16V5Z" fill="#e8c238" />
                  <path d="M3 8.500H16M2 12.500Q4 13.500 9 13.500H16M2 9Q3 9.500 9 9.500M2 16Q4 17.500 9 17.500H16" stroke="#1b1704" strokeWidth="1.500" />
                  <path d="M2 5V9M16.500 4V17" stroke="#1b1704" strokeWidth="1.200" />
                  <ellipse cx="9" cy="5.500" rx="7" ry="2.500" fill="#f7e27a" stroke="#1b1704" strokeWidth="1.200" />
                </svg>
                <div className="flex-1 pl-px leading-[22px]">Model Database</div>
                <div className="m-px flex w-[11px] items-center justify-center border border-[#666] bg-gradient-to-b from-[#f8f8f8] to-[#d4d4d4]"><Arrow /></div>
              </div>
              <div className="ml-[7px] flex flex-col gap-[6px]">
                <svg width="9" height="5" viewBox="0 0 9 5"><path d="M0 5L4.500 0L9 5Z" fill="#9b9b9b" /></svg>
                <svg width="9" height="5" viewBox="0 0 9 5"><path d="M0 0H9L4.500 5Z" fill="#9b9b9b" /></svg>
              </div>
              <svg width="15" height="12" viewBox="0 0 15 12" fill="none" stroke="#9b9b9b" className="ml-[10px] shrink-0">
                <path d="M.5 11.500V2L2 .5H5L6.500 2H14.500V11.500Z" />
                <path d="M10 8.500H6V4M4 6L6 3.500L8 6" strokeWidth="1.300" />
              </svg>
              <svg width="15" height="15" viewBox="0 0 15 15" fill="none" stroke="#9b9b9b" className="ml-3 shrink-0">
                <path d="M1.500 1.500H4.500V4.500H1.500ZM5 3L8 6M6.500 5.500H9.500V8.500H6.500ZM3 5L5 10M10 8L12 11M11.500 10.500H14V13.500H11.500ZM5.500 10.500H8.500V13.500H5.500Z" />
              </svg>
              <svg width="16" height="16" viewBox="0 0 16 16" fill="none" className="ml-[10px] shrink-0">
                <path d="M8 0V1.500M2.500 2L4 3.500M13.500 2L12 3.500M0 6.500H2M14 6.500H16M2.500 11L4 10M13.500 11L12 10" stroke="#111" />
                <path d="M5.500 11Q3.500 9 3.500 6.500A4.500 4.500 0 0 1 12.500 6.500Q12.500 9 10.500 11Z" fill="#fbe773" stroke="#222" />
                <path d="M5.500 12H10.500M6 13.500H10M7 15H9" stroke="#333" strokeWidth="1.300" />
              </svg>
            </div>
            <div className="mt-[4px] flex h-[468px] w-[315px] shrink-0 border border-[#9a9a9f] bg-white">
              <div className="flex min-w-0 flex-1 overflow-hidden">
                <div className="flex w-[13px] shrink-0 flex-col items-center pt-[5px]">
                  <Toggle />
                  <div className="w-px flex-1 border-l border-dotted border-[#9a9a9a]" />
                </div>
                <div className="-ml-[13px] min-w-0 flex-1">
                  <div className="flex h-[19px] items-center pl-[15px]">
                    <TIcon n="asm" />
                    <div className="ml-[5px] leading-[19px]">Models (1)</div>
                  </div>
                  <div className="flex h-[19px] items-start pl-[19px]">
                    <div className="pt-[5px]"><Toggle /></div>
                    <div className="ml-[5px] border-b-2 border-black pt-[2px] leading-[14px]">CoberturaMetálica</div>
                  </div>
                  <div className="whitespace-nowrap">
                    {rows.map((r) => (
                      <Row key={r[0]} r={r} />
                    ))}
                  </div>
                </div>
              </div>
              <div className="flex w-[15px] flex-col items-center bg-[#efefef]">
                <div className="flex h-[18px] items-center"><Arrow up c="#444" /></div>
                <div className="flex h-[311px] w-[15px] items-center justify-center rounded-[2px] border border-[#8f8f94] bg-gradient-to-r from-[#f6f6f6] via-[#e4e4e6] to-[#c4c4c8]">
                  <svg width="7" height="8" viewBox="0 0 7 8" shapeRendering="crispEdges"><path d="M0 .5H7M0 3.500H7M0 6.500H7" stroke="#555" /></svg>
                </div>
                <div className="mt-auto flex h-[17px] items-center"><Arrow c="#444" /></div>
              </div>
            </div>
          </div>
        </div>

        <div className="flex w-[1041px] flex-col">
          <div className="flex h-8 shrink-0 items-center bg-gradient-to-b from-white to-[#ececec] pl-2">
            <div className="w-[49px]">Module:</div>
            <Combo text="Part" c="w-[108px]" spin on />
            <div className="ml-[12px] w-[42px]">Model:</div>
            <Combo text="CoberturaMetálica" c="w-[137px]" spin />
            <div className="ml-[12px] w-[29px]">Part:</div>
            <Combo text="treliça" c="w-[89px]" spin />
          </div>
          <div className="flex h-[467px] shrink-0">
            <div className="w-[62px] shrink-0 bg-gradient-to-r from-[#fdfdfd] to-[#ececec] pt-1">
              {boxGroups.map((g, i) => (
                <div key={i} className={i < 5 ? "mb-[5px] border-b border-[#a6a6a6] pb-px" : ""}>
                  {g.map((r, j) => (
                    <div key={j} className="flex pl-[3px]">
                      {r.map((b, k) => (
                        <React.Fragment key={k}>{b}</React.Fragment>
                      ))}
                    </div>
                  ))}
                </div>
              ))}
            </div>
            <div className="h-[467px] w-[979px] border-l border-t border-[#5c5c60] bg-[linear-gradient(180deg,#1b2d48_0%,#31425b_58%,#a3b2cb_100%)]">
              <Canvas />
            </div>
          </div>
          <div className="flex h-[34px] shrink-0 items-center bg-gradient-to-b from-white to-[#ececec] pl-[7px]">
            <div className="flex h-[22px] w-[18px] items-center justify-center rounded-sm border border-[#b4b4b4]">
              <svg width="14" height="12" viewBox="0 0 14 12"><path d="M0 6L6 0V4H14V8H6V12Z" fill="#999" /></svg>
            </div>
            <div className="ml-1 flex h-[22px] w-[18px] items-center justify-center rounded-sm border border-[#777] bg-gradient-to-b from-white to-[#d4d4d4]">
              <svg width="12" height="12" viewBox="0 0 12 12"><path d="M1 1L11 11M10 1L1 11" stroke="#e81010" strokeWidth="1.700" /></svg>
            </div>
            <div className="ml-[7px] pt-[2px]">Select a point from which to offset</div>
            <svg width="106" height="24" viewBox="0 0 106 24" fill="none" className="ml-auto mr-px mt-[3px] tracking-normal" stroke="#4b5c68">
              <path d="M8 1.500H13Q16.500 1.500 15 4.500Q13.500 7.500 9 9M5.500 13H10.500Q14 13 11.500 16.500Q9 20 2 21.500L8.500 13.500M22 8.500Q15.500 8 16.500 11.500Q17 13 18.500 14.500Q20 18.500 13.500 18.500" strokeWidth="1.800" />
              <text x="27" y="19" fontSize="14" fontWeight="bold" textLength="77" lengthAdjust="spacingAndGlyphs" fill="#4b5c68" stroke="none" transform="skewX(-10) translate(3 0)" className="[font-family:'Open_Sans',sans-serif]">SIMULIA</text>
            </svg>
          </div>
        </div>
      </div>

      {/* message area */}
      <div className="flex h-[92px] shrink-0 pt-[4px]">
        <div className="flex w-[39px] flex-col pl-[2px]">
          <div className="flex h-[38px] items-center justify-center border-l border-t border-[#8b8b93] bg-white pr-[3px]">
            <svg width="22" height="24" viewBox="0 0 22 24" fill="none">
              <rect x="3.500" y="3.500" width="17" height="17" fill="url(#gr)" stroke="#444" />
              <path d="M3 21L9 14.500L12 17L5 23Z" fill="#e5b53a" stroke="#2c2208" />
              <path d="M2 23.500L5 20" stroke="#111" strokeWidth="1.500" />
            </svg>
          </div>
          <div className="ml-[2px] flex h-[36px] items-center justify-center border border-r-0 border-[#8b8b93] bg-[#e2e2e2]">
            <svg width="24" height="24" viewBox="0 0 24 24" fill="none">
              <rect x="1" y="1" width="22" height="22" fill="#f3d257" stroke="#111" strokeWidth="2" />
              <path d="M4.500 8L8 12L4.500 16M10.500 8L14 12L10.500 16M16.500 8L20 12L16.500 16" stroke="#111" strokeWidth="1.600" />
            </svg>
          </div>
        </div>
        <div className="mt-[38px] h-[47px] w-[2px] border-l border-[#8b8b93] bg-white" />
        <div className="h-[85px] w-[1307px] border border-t-2 border-[#9d9da3] border-t-[#8f8f96] bg-white pl-[4px] pt-[3px] text-[13.3px] leading-[13px] tracking-normal [font-family:'Liberation_Mono',monospace]">
          <div>A new model database has been created.</div>
          <div>The model "Model-1" has been created.</div>
        </div>
        <div className="flex flex-1 items-end justify-end pb-[4px] pr-[2px]">
          <svg width="13" height="13" viewBox="0 0 13 13" fill="#a2a2a2">
            <path d="M10 0h2v2h-2zM10 5h2v2h-2zM5 5h2v2h-2zM10 10h2v2h-2zM5 10h2v2h-2zM0 10h2v2h-2z" />
          </svg>
        </div>
      </div>
      <div className="h-px shrink-0 bg-[#2e2e33]" />
    </div>
  );
}
